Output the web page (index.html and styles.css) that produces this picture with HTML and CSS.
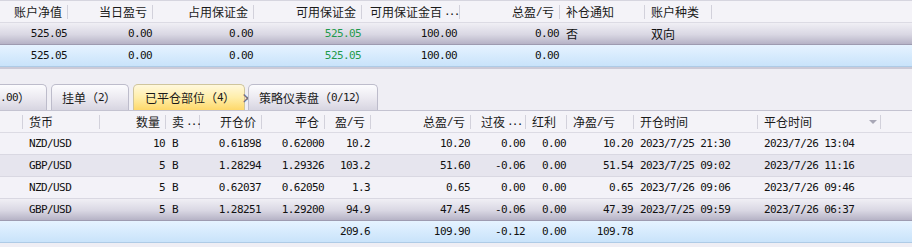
FILE: index.html
```html
<!DOCTYPE html>
<html lang="zh-CN">
<head>
  <meta charset="UTF-8" />
  <title>账户</title>
  <link rel="stylesheet" href="styles.css">
</head>
<body>

<!-- Account summary -->
<div class="grid top">
  <div class="row head">
    <div class="cell hr">账户净值</div>
    <div class="cell hr">当日盈亏</div>
    <div class="cell hr">占用保证金</div>
    <div class="cell hr">可用保证金</div>
    <div class="cell hl pct">可用保证金百<span class="a dots">...</span></div>
    <div class="cell hr">总盈<span class="a">/</span>亏</div>
    <div class="cell hl">补仓通知</div>
    <div class="cell hl">账户种类</div>
    <div class="cell fill"></div>
  </div>
  <div class="row sel">
    <div class="cell vr num">525.05</div>
    <div class="cell vr num">0.00</div>
    <div class="cell vr num">0.00</div>
    <div class="cell vr num green">525.05</div>
    <div class="cell vr num pad3">100.00</div>
    <div class="cell vr num">0.00</div>
    <div class="cell vl">否</div>
    <div class="cell vl">双向</div>
    <div class="cell"></div>
  </div>
  <div class="row sum">
    <div class="cell vr num">525.05</div>
    <div class="cell vr num">0.00</div>
    <div class="cell vr num">0.00</div>
    <div class="cell vr num green">525.05</div>
    <div class="cell vr num pad3">100.00</div>
    <div class="cell vr num">0.00</div>
    <div class="cell"></div>
    <div class="cell"></div>
    <div class="cell"></div>
  </div>
</div>

<!-- Tabs -->
<div class="tabstrip">
  <div class="tab first"><span class="num">.00</span>）</div>
  <div class="tab t2">挂单（<span class="a">2</span>）</div>
  <div class="tab t3 active">已平仓部位（<span class="a">4</span>）<span class="close">×</span></div>
  <div class="tab t4">策略仪表盘（<span class="a">0/12</span>）</div>
</div>

<!-- Closed positions -->
<div class="grid bottom">
  <div class="row head">
    <div class="cell"></div>
    <div class="cell hl">货币</div>
    <div class="cell hr">数量</div>
    <div class="cell hl">卖<span class="a dots">...</span></div>
    <div class="cell hr">开仓价</div>
    <div class="cell hr">平仓</div>
    <div class="cell hr">盈<span class="a">/</span>亏</div>
    <div class="cell hr">总盈<span class="a">/</span>亏</div>
    <div class="cell hl night">过夜<span class="a dots">...</span></div>
    <div class="cell hl">红利</div>
    <div class="cell hl">净盈<span class="a">/</span>亏</div>
    <div class="cell hl">开仓时间</div>
    <div class="cell hl sort">平仓时间<span class="arrow"></span></div>
    <div class="cell fill"></div>
  </div>
</div>

<script>
  // Closed position rows
  const rows = [
    ["NZD/USD", "10", "B", "0.61898", "0.62000", "10.2", "10.20", "0.00", "0.00", "10.20", "2023/7/25 21:30", "2023/7/26 13:04"],
    ["GBP/USD", "5", "B", "1.28294", "1.29326", "103.2", "51.60", "-0.06", "0.00", "51.54", "2023/7/25 09:02", "2023/7/26 11:16"],
    ["NZD/USD", "5", "B", "0.62037", "0.62050", "1.3", "0.65", "0.00", "0.00", "0.65", "2023/7/26 09:06", "2023/7/26 09:46"],
    ["GBP/USD", "5", "B", "1.28251", "1.29200", "94.9", "47.45", "-0.06", "0.00", "47.39", "2023/7/25 09:59", "2023/7/26 06:37"]
  ];
  const total = ["", "", "", "", "", "209.6", "109.90", "-0.12", "0.00", "109.78", "", ""];
  // which columns are left aligned
  const leftCols = [0, 2, 10, 11];
  const grid = document.querySelector(".bottom");

  function addRow(values, cls) {
    const row = document.createElement("div");
    row.className = "row " + cls;
    let html = `<div class="cell"></div>`;
    values.forEach((v, i) => {
      const align = leftCols.includes(i) ? "vl" : "vr";
      html += `<div class="cell ${align} num">${v}</div>`;
    });
    html += `<div class="cell"></div>`;
    row.innerHTML = html;
    grid.appendChild(row);
  }

  rows.forEach((r, i) => {
    let cls = i % 2 ? "even" : "odd";
    if (i === rows.length - 1) cls = "sel";
    addRow(r, cls);
  });
  addRow(total, "sum");
</script>

</body>
</html>
```

FILE: styles.css
```css
* { margin: 0; padding: 0; box-sizing: border-box; }

body {
  font-family: "Noto Sans CJK SC", sans-serif;
  font-size: 12px;
  color: #111;
  background: #efeef4;
  overflow: hidden;
}

.grid {
  background: #f1f0f6;
}

.top {
  border-top: 1px solid #d6d5df;
  border-bottom: 2px solid #cbcad7;
}

.row {
  display: grid;
  height: 22px;
  border-bottom: 1px solid #d9d8e2;
}

.top .row {
  grid-template-columns: 68px 85px 101px 108px 98px 100px 85px 67px 1fr;
}

.bottom .row {
  grid-template-columns: 23px 77px 66px 34px 62px 63px 46px 100px 55px 41px 67px 124px 123px 1fr;
}

.cell {
  display: flex;
  align-items: center;
  overflow: hidden;
  white-space: nowrap;
}

/* header */
.head {
  background: #f4f3f8;
  border-bottom: 1px solid #dcdbe4;
}

.head .cell {
  background: linear-gradient(#d2d1db, #d2d1db) right center / 1px 14px no-repeat;
  color: #1a1a1a;
}

.head .cell.fill {
  background: none;
}

.hr { justify-content: flex-end; padding-right: 6px; }
.hl { padding-left: 6px; }
.hl.pct { padding-left: 8px; }
.hl.night { padding-left: 10px; }

.sort {
  justify-content: space-between;
  padding-right: 4px;
}

.arrow {
  width: 0;
  height: 0;
  border-left: 4px solid transparent;
  border-right: 4px solid transparent;
  border-top: 4px solid #a8a7b6;
}

/* values */
.vr { justify-content: flex-end; padding-right: 1px; }
.vr.pad3 { padding-right: 3px; }
.vl { padding-left: 6px; }

.num, .a {
  font-family: "DejaVu Sans Mono", monospace;
  font-size: 11px;
  letter-spacing: -0.6px;
}

.a.dots {
  letter-spacing: -1.8px;
  padding-left: 2px;
}

.green { color: #1f9a4c; }

/* row styles */
.odd { background: #f3f2f8; }
.even { background: #e6e5ee; }

.sel {
  background: linear-gradient(#f0eff5, #d9d7e3 55%, #b6b3c6);
  border-bottom: 1px solid #9e9bb0;
}

.sum {
  background: linear-gradient(#e6f3ff, #d7ebfd 50%, #c9e3fa);
  border-bottom: 1px solid #aecbe6;
}

/* tabs */
.tabstrip {
  display: flex;
  align-items: flex-end;
  height: 42px;
  padding-top: 16px;
  border-bottom: 1px solid #c4c3d1;
  background: #efeef4;
}

.tab {
  display: flex;
  align-items: center;
  height: 26px;
  padding-left: 10px;
  margin-right: 4px;
  border: 1px solid #bdbccb;
  border-bottom: none;
  border-radius: 5px 5px 0 0;
  background: linear-gradient(#fcfcfe, #eceaf1 50%, #d7d5e1);
  color: #1a1a1a;
  white-space: nowrap;
}

.tab.first {
  width: 47px;
  padding-left: 0;
  border-left: none;
  border-radius: 0 5px 0 0;
}

.t2 { width: 78px; }
.t3 { width: 112px; margin-right: 3px; padding-left: 11px; }
.t4 { width: 130px; }

.tab.active {
  background: linear-gradient(#fff8dc, #ffeeaa 50%, #fed86a);
  border-color: #cfc59c;
}

.close {
  margin-left: 6px;
  color: #707080;
  font-weight: bold;
  font-size: 13px;
}
```
